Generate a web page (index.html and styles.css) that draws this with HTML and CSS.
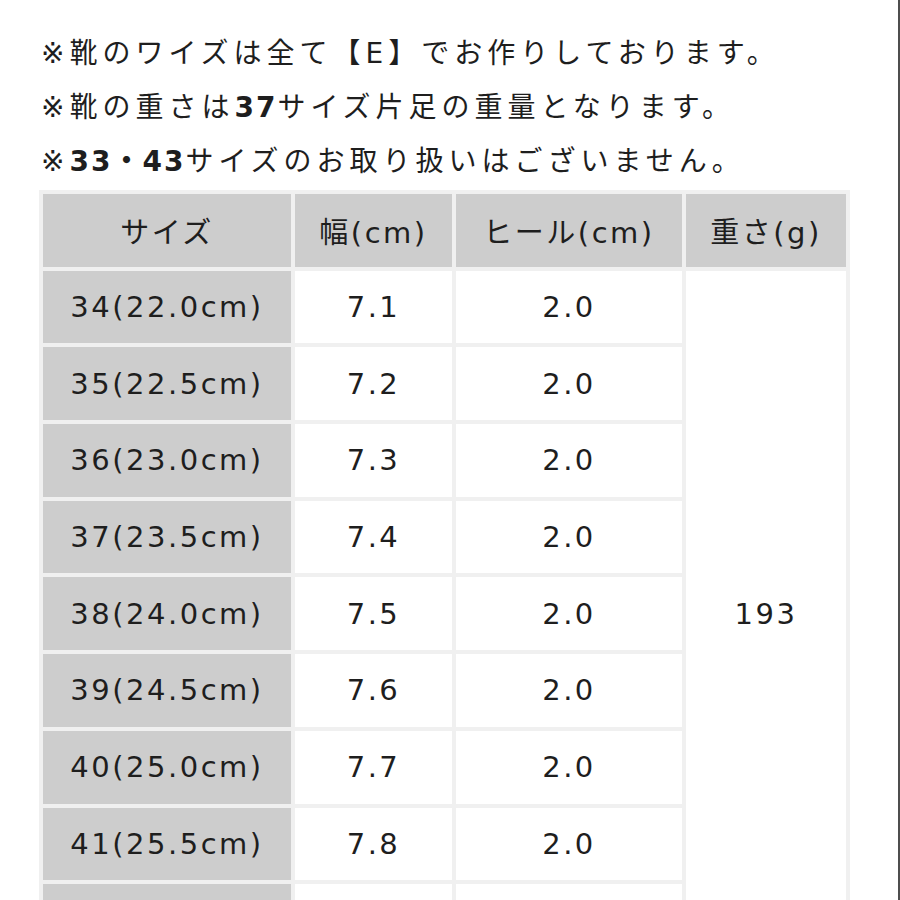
FILE: index.html
```html
<!DOCTYPE html>
<html lang="ja">
<head>
<meta charset="utf-8">
<link rel="stylesheet" href="styles.css">
</head>
<body>
<div class="page">
  <div class="notes">
    <p class="note">※靴のワイズは全て【E】でお作りしております。</p>
    <p class="note">※靴の重さは<b class="num">37</b>サイズ片足の重量となります。</p>
    <p class="note">※<b class="num">33・43</b>サイズのお取り扱いはございません。</p>
  </div>
  <table class="size-table">
    <thead>
      <tr>
        <th class="c1">サイズ</th>
        <th class="c2">幅(cm)</th>
        <th class="c3">ヒール(cm)</th>
        <th class="c4">重さ(g)</th>
      </tr>
    </thead>
    <tbody>
      <tr><th class="rowhead">34(22.0cm)</th><td>7.1</td><td>2.0</td><td class="weight" rowspan="9">193</td></tr>
      <tr><th class="rowhead">35(22.5cm)</th><td>7.2</td><td>2.0</td></tr>
      <tr><th class="rowhead">36(23.0cm)</th><td>7.3</td><td>2.0</td></tr>
      <tr><th class="rowhead">37(23.5cm)</th><td>7.4</td><td>2.0</td></tr>
      <tr><th class="rowhead">38(24.0cm)</th><td>7.5</td><td>2.0</td></tr>
      <tr><th class="rowhead">39(24.5cm)</th><td>7.6</td><td>2.0</td></tr>
      <tr><th class="rowhead">40(25.0cm)</th><td>7.7</td><td>2.0</td></tr>
      <tr><th class="rowhead">41(25.5cm)</th><td>7.8</td><td>2.0</td></tr>
      <tr><th class="rowhead">42(26.0cm)</th><td>7.9</td><td>2.0</td></tr>
    </tbody>
  </table>
</div>
</body>
</html>
```

FILE: styles.css
```css
html, body {
  margin: 0;
  padding: 0;
  background: #ffffff;
}
body {
  font-family: "DejaVu Sans", "Noto Sans CJK JP", sans-serif;
  color: #1e1e1e;
}
.page {
  width: 900px;
  min-height: 100vh;
  border-right: 2px solid #4d4d4d;
  padding: 27px 0 0 39px;
  box-sizing: border-box;
}
.notes {
  margin: 0 0 1px 2px;
}
.note {
  margin: 0;
  font-size: 28px;
  line-height: 54px;
  letter-spacing: 5px;
  font-weight: 400;
  white-space: nowrap;
}
.num {
  font-weight: 700;
  letter-spacing: 2px;
}
.size-table {
  border-collapse: separate;
  border-spacing: 4px;
  background: #f0f0f0;
  font-size: 29px;
  letter-spacing: 2.5px;
}
.size-table th,
.size-table td {
  height: 72.7px;
  padding: 0;
  text-align: center;
  vertical-align: middle;
  font-weight: 400;
  color: #1e1e1e;
}
.size-table thead th {
  background: #cdcdcd;
}
.size-table .rowhead {
  background: #cdcdcd;
}
.size-table td {
  background: #ffffff;
}
.c1 { width: 248px; }
.c2 { width: 157px; }
.c3 { width: 226px; }
.c4 { width: 160px; }
```
